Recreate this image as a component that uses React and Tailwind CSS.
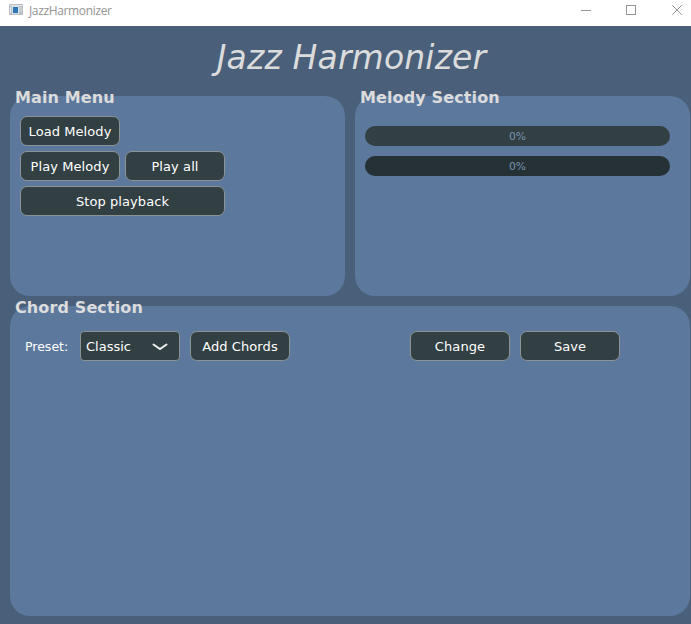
function Button({ className = 'w-[100px]', children }) {
  return (
    <button
      className={`flex h-[30px] shrink-0 items-center justify-center whitespace-nowrap rounded-[7px] border border-[#8b9394] bg-[#323f43] pt-[2px] text-[13px] tracking-[0.08px] text-white ${className}`}
    >
      {children}
    </button>
  );
}

function Panel({ title, className, children }) {
  return (
    <section className={`shrink-0 rounded-[20px] bg-[#5c789c] ${className}`}>
      <h2 className="-mt-[8px] h-[19px] whitespace-nowrap pl-[5px] text-[16px] leading-[20px] font-bold tracking-[0.12px] text-[#dcdcdc]">
        {title}
      </h2>
      {children}
    </section>
  );
}

function Progress({ className }) {
  return (
    <div
      className={`flex h-[20px] w-[305px] items-center justify-center rounded-[10px] pt-[2px] text-[10.7px] text-[#7894b0] ${className}`}
    >
      0%
    </div>
  );
}

export default function App() {
  return (
    <div className="flex h-[624px] w-[691px] flex-col overflow-hidden bg-[#4a5f7a] font-['DejaVu_Sans',sans-serif]">
      <header className="flex h-[26px] shrink-0 items-start bg-white">
        <svg className="mt-[4px] ml-[9px] shrink-0" width="14" height="11" viewBox="0 0 14 11" shapeRendering="crispEdges">
          <rect width="14" height="11" fill="#b9bfc4" />
          <rect x="1" y="1" width="12" height="1" fill="#dfe3e6" />
          <rect x="1" y="3" width="1" height="6" fill="#e4e7e9" />
          <rect x="10" y="3" width="3" height="5" fill="#c9ced2" />
          <rect x="3" y="2" width="7" height="8" fill="#d5e2ec" />
          <rect x="4" y="3" width="5" height="6" fill="#2e75b6" />
        </svg>
        <span className="ml-[6px] h-[22px] w-[86px] whitespace-nowrap font-['Open_Sans',sans-serif] text-[12px] leading-[22px] tracking-[-0.35px] text-[#949494]">
          JazzHarmonizer
        </span>
        <svg className="mt-[5px] mr-[9px] ml-auto shrink-0" width="101" height="10" viewBox="0 0 101 10" fill="none" stroke="#929695">
          <path d="M0 5.5H10" />
          <rect x="45.5" y="0.5" width="9" height="9" />
          <path d="M91.2 0.2L100.8 9.8M100.8 0.2L91.2 9.8" />
        </svg>
      </header>
      <h1 className="h-[70px] shrink-0 whitespace-nowrap pt-[13px] pl-[12px] text-center text-[33px] leading-[38px] tracking-[0.15px] italic text-[#dcdcdc]">
        Jazz Harmonizer
      </h1>
      <main className="flex flex-col gap-[10px] pl-[10px]">
        <div className="flex gap-[10px]">
          <Panel title="Main Menu" className="h-[200px] w-[335px]">
            <div className="mt-[9px] ml-[10px] grid w-[205px] grid-cols-2 gap-[5px]">
              <Button className="col-span-2 w-[100px]">Load Melody</Button>
              <Button>Play Melody</Button>
              <Button>Play all</Button>
              <Button className="col-span-2 w-[205px]">Stop playback</Button>
            </div>
          </Panel>
          <Panel title="Melody Section" className="h-[200px] w-[335px]">
            <div className="mt-[19px] ml-[10px] flex flex-col gap-[10px]">
              <Progress className="bg-[#323f43]" />
              <Progress className="bg-[#263136]" />
            </div>
          </Panel>
        </div>
        <Panel title="Chord Section" className="h-[310px] w-[680px]">
          <div className="mt-[14px] flex h-[30px] items-center pl-[15px]">
            <span className="w-[55px] shrink-0 whitespace-nowrap pt-[2px] text-[12.5px] text-white">Preset:</span>
            <button className="mr-[10px] flex h-[30px] w-[100px] shrink-0 items-center justify-between rounded-[4px] border border-[#8b9394] bg-[#323f43] pt-[2px] pr-[11px] pl-[5px] text-[13px] text-white">
              Classic
              <svg width="16" height="8" viewBox="0 0 16 8" fill="none" stroke="#eeeeee" strokeWidth="2" strokeLinecap="round">
                <path d="M1.5 1.5L8 6L14.5 1.5" />
              </svg>
            </button>
            <Button>Add Chords</Button>
            <Button className="ml-[120px] w-[100px]">Change</Button>
            <Button className="ml-[10px] w-[100px]">Save</Button>
          </div>
        </Panel>
      </main>
    </div>
  );
}
